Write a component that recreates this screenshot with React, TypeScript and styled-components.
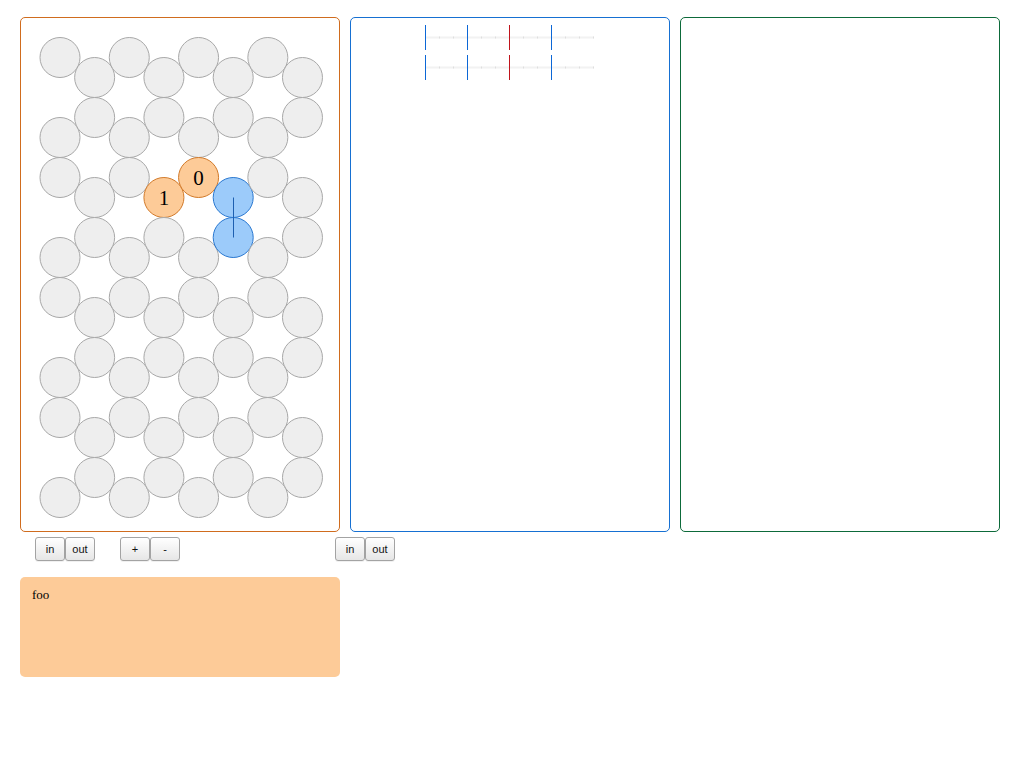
import styled, { createGlobalStyle } from 'styled-components';

const GlobalStyle = createGlobalStyle`
    body {
        margin: 0;
        background: #ffffff;
        font-family: "Liberation Serif", serif;
    }
`;

const Page = styled.div`
    padding: 17px 20px 0 20px;
`;

const PanelRow = styled.div`
    display: flex;
    gap: 10px;
`;

const Panel = styled.div<{ $color: string }>`
    flex: none;
    width: 320px;
    height: 515px;
    box-sizing: border-box;
    border: 1px solid ${(p) => p.$color};
    border-radius: 5px;
    overflow: hidden;
`;

const Canvas = styled.svg`
    display: block;
    width: 318px;
    height: 513px;
`;

const Controls = styled.div`
    display: flex;
    align-items: center;
    margin-top: 5px;
    padding-left: 15px;
    height: 24px;
`;

const ButtonGroup = styled.div<{ $offset: number }>`
    display: flex;
    margin-left: ${(p) => p.$offset}px;
`;

const Button = styled.button`
    width: 30px;
    height: 24px;
    padding: 0;
    font-family: "Liberation Sans", Arial, sans-serif;
    font-size: 11px;
    color: #111;
    background: linear-gradient(#ffffff, #e6e6e6);
    border: 1px solid #a3a3a3;
    border-radius: 3px;
    box-shadow: 0 1px 0 rgba(0, 0, 0, 0.06);
`;

const Note = styled.div`
    margin-top: 16px;
    width: 320px;
    height: 100px;
    box-sizing: border-box;
    padding: 10px 12px;
    background: #fdcb98;
    border-radius: 5px;
    font-size: 13px;
    color: #000;
`;

const EVEN_ROWS = [40, 120, 160, 240, 280, 360, 400, 480];
const ODD_ROWS = [60, 100, 180, 220, 300, 340, 420, 460];
const STEP = 34.64;
const OX = 39;
const OY = -0.5;

type Node = { x: number; y: number; kind: 'plain' | 'orange' | 'blue'; label?: string };

const buildNodes = (): Node[] => {
    const nodes: Node[] = [];
    for (let c = 0; c < 8; c++) {
        const rows = c % 2 === 0 ? EVEN_ROWS : ODD_ROWS;
        rows.forEach((row) => {
            const x = OX + c * STEP;
            const y = row + OY;
            let kind: Node['kind'] = 'plain';
            let label: string | undefined;
            if (c === 3 && row === 180) { kind = 'orange'; label = '1'; }
            if (c === 4 && row === 160) { kind = 'orange'; label = '0'; }
            if (c === 5 && (row === 180 || row === 220)) kind = 'blue';
            nodes.push({ x, y, kind, label });
        });
    }
    return nodes;
};

const FILL = { plain: '#eeeeee', orange: '#fdcb98', blue: '#9ccbfa' };
const STROKE = { plain: '#a8a8a8', orange: '#d27a2a', blue: '#2a78d0' };

const HexBoard = () => {
    const nodes = buildNodes();
    const bx = Math.round(OX + 5 * STEP) + 0.5;
    return (
        <Canvas viewBox="0 0 318 513">
            {nodes.map((n, i) => (
                <circle key={i} cx={n.x} cy={n.y} r={20} fill={FILL[n.kind]} stroke={STROKE[n.kind]} strokeWidth={1} />
            ))}
            <line x1={bx} y1={180 + OY} x2={bx} y2={220 + OY} stroke="#1d5fb0" strokeWidth={1} />
            {nodes.filter((n) => n.label).map((n, i) => (
                <text key={i} x={n.x} y={n.y + 7} textAnchor="middle" fontFamily="Liberation Serif, serif" fontSize="21" fill="#000">
                    {n.label}
                </text>
            ))}
        </Canvas>
    );
};

const TICKS = [74.5, 116.5, 158.5, 200.5];

const Timeline = () => (
    <Canvas viewBox="0 0 318 513">
        {[19.5, 49.5].map((y) => (
            <g key={y}>
                <line x1={74} y1={y} x2={243} y2={y} stroke="#f2f2f2" strokeWidth={2} />
                {Array.from({ length: 13 }).map((_, i) => (
                    <rect key={i} x={74 + i * 14} y={y - 1} width={1} height={2} fill="#dedede" />
                ))}
                {TICKS.map((x, i) => (
                    <line key={x} x1={x} y1={y - 12.5} x2={x} y2={y + 12.5} stroke={i === 2 ? '#c0141c' : '#0c67d6'} strokeWidth={1} />
                ))}
            </g>
        ))}
    </Canvas>
);

const App = () => {
    return (
        <Page>
            <GlobalStyle />
            <PanelRow>
                <Panel $color="#d06c1e">
                    <HexBoard />
                </Panel>
                <Panel $color="#1670d2">
                    <Timeline />
                </Panel>
                <Panel $color="#0d6a3a" />
            </PanelRow>
            <Controls>
                <ButtonGroup $offset={0}>
                    <Button>in</Button>
                    <Button>out</Button>
                </ButtonGroup>
                <ButtonGroup $offset={25}>
                    <Button>+</Button>
                    <Button>-</Button>
                </ButtonGroup>
                <ButtonGroup $offset={155}>
                    <Button>in</Button>
                    <Button>out</Button>
                </ButtonGroup>
            </Controls>
            <Note>foo</Note>
        </Page>
    );
};

export default App;
